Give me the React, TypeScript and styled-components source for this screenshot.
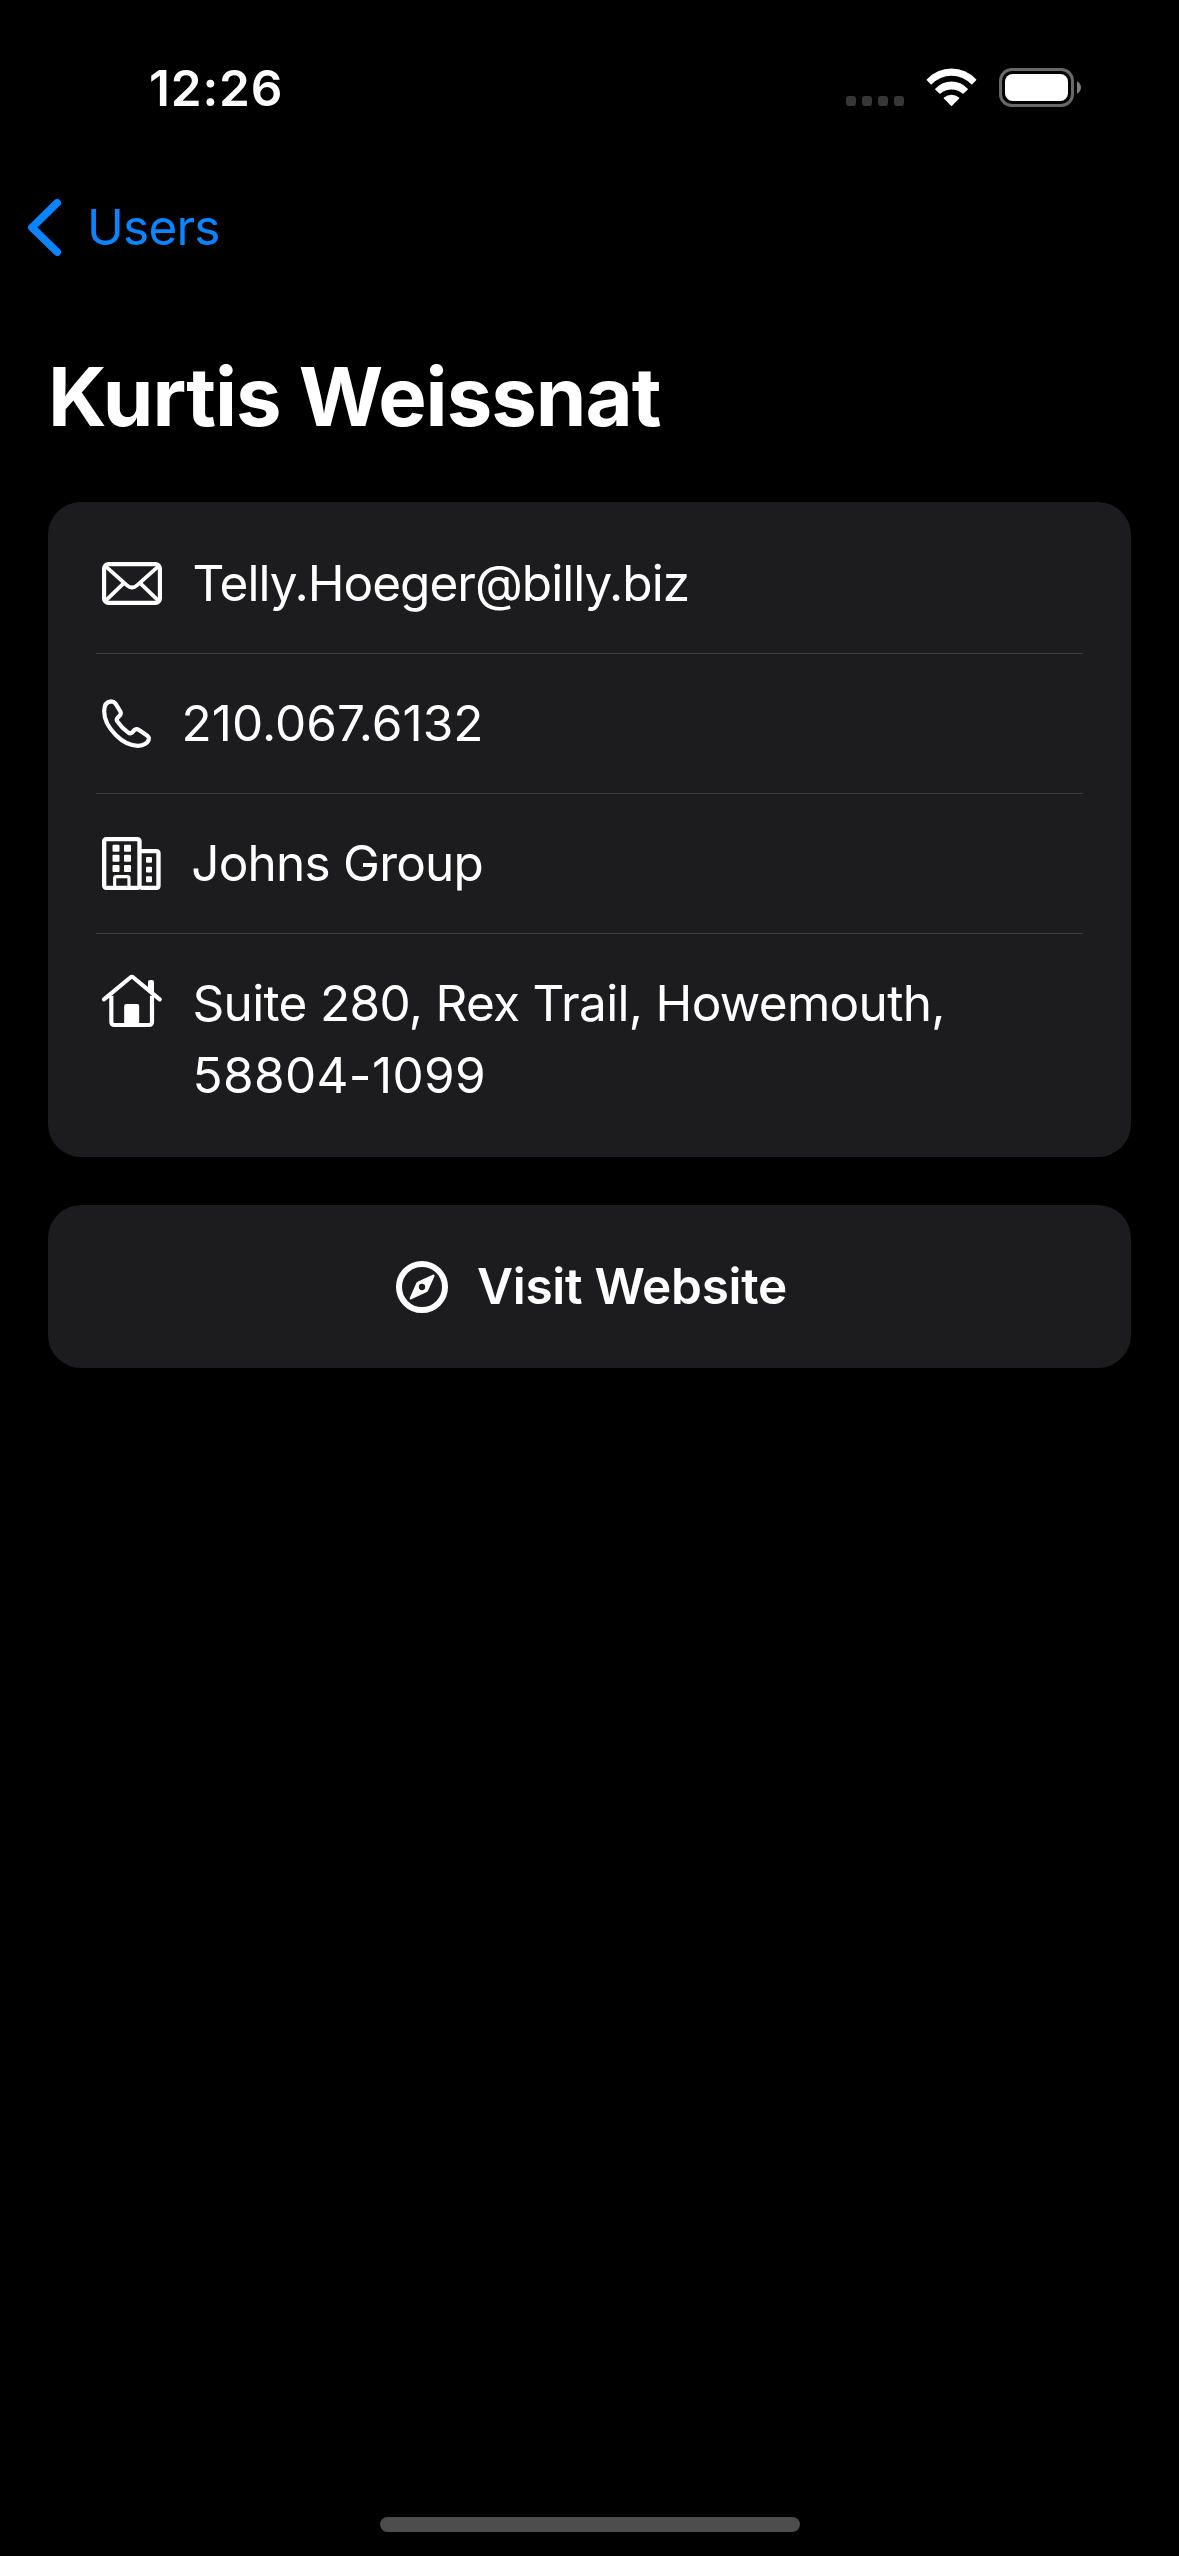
import React from "react";
import styled, { createGlobalStyle } from "styled-components";

const GlobalStyle = createGlobalStyle`
  *, *::before, *::after { box-sizing: border-box; }
  body { margin: 0; background: #000; }
`;

const Screen = styled.div`
  display: flex;
  flex-direction: column;
  width: 1179px;
  height: 2556px;
  background: #000;
  color: #fff;
  font-family: Inter, "Liberation Sans", sans-serif;
  font-size: 49.5px;
  overflow: hidden;
`;

const Label = styled.span<{ $tracking: number }>`
  display: block;
  letter-spacing: ${(p) => p.$tracking}px;
  white-space: nowrap;
`;

const StatusBar = styled.header`
  display: flex;
  align-items: flex-start;
  justify-content: space-between;
  height: 177px;
  padding: 58px 98px 0 149px;
`;

const Time = styled.div`
  font-weight: 600;
  line-height: 60px;
`;

const Indicators = styled.div`
  display: flex;
  gap: 22px;
`;

const NavBar = styled.nav`
  display: flex;
  height: 100px;
  padding-left: 28px;
`;

const BackButton = styled.button`
  display: flex;
  align-items: center;
  gap: 26px;
  padding: 0;
  border: 0;
  background: none;
  color: #0a84ff;
  font: inherit;
  line-height: 100px;
`;

const Title = styled.h1`
  margin: 70px 48px 55px;
  font-size: 81.4px;
  font-weight: 700;
  line-height: 100px;
`;

const Card = styled.section`
  margin: 0 48px;
  padding: 12px 48px;
  border-radius: 33px;
  background: #1c1c1e;
`;

const Row = styled.div`
  display: flex;
  gap: 30.5px;
  padding: 33px 0 34px 6px;
  border-bottom: 1px solid #3d3d40;

  &:last-child {
    border-bottom: 0;
  }
`;

const RowText = styled.div`
  line-height: 72px;
`;

const WebsiteButton = styled.button`
  display: flex;
  align-items: center;
  justify-content: center;
  gap: 29px;
  height: 163px;
  margin: 48px 48px 0;
  padding: 0 0 0 4px;
  border: 0;
  border-radius: 33px;
  background: #1c1c1e;
  color: #fff;
  font: inherit;
  font-weight: 600;
  line-height: 60px;
`;

const ButtonText = styled.div`
  padding-bottom: 2px;
`;

const HomeIndicator = styled.div`
  align-self: center;
  width: 420px;
  height: 15px;
  margin: auto 0 24px;
  border-radius: 8px;
  background: #4d4d4d;
`;

const Glyph = styled.svg`
  display: block;
  flex: none;
  fill: none;
  stroke: currentColor;
  stroke-linecap: round;
  stroke-linejoin: round;
`;

const CellularDots = () => (
  <Glyph width="58" height="60" viewBox="78 54 174 180">
    <g fill="#363636" stroke="none">
      {[78, 126, 174, 222].map((x) => (
        <rect key={x} x={x} y="168" width="30" height="30" rx="9" />
      ))}
    </g>
  </Glyph>
);

const WifiIcon = () => (
  <Glyph width="51" height="60" viewBox="318 54 153 180">
    <g fill="#fff" stroke="none">
      <path d="M320.5 121Q319 119 321 117.500A100 100 0 0 1 468 117.500Q470 119 468.500 121L457 133Q455.500 134.500 454 133A81 81 0 0 0 335 133Q333.500 134.500 332 133Z" />
      <path d="M346 149Q344.500 147 346.500 145.500A65 65 0 0 1 442.500 145.500Q444.500 147 443 149L430.500 160.500Q429 162 427.500 160.500A51 51 0 0 0 361.500 160.500Q360 162 358.500 160.500Z" />
      <path d="M371.500 175.500Q370.500 174 372 172.500A35 35 0 0 1 417 172.500Q418.500 174 417.500 175.500L396 197Q394.500 198.500 393 197Z" />
    </g>
  </Glyph>
);

const BatteryIcon = () => (
  <Glyph width="82" height="60" viewBox="537 54 246 180">
    <rect x="541.5" y="88.5" width="216" height="108" rx="34" stroke="#686868" strokeWidth="9" />
    <rect x="555" y="102" width="189" height="81" rx="23" fill="#fff" stroke="none" />
    <path d="M771 124Q783 131 783 142.500Q783 154 771 161Z" fill="#7d7d7d" stroke="none" />
  </Glyph>
);

const ChevronIcon = () => (
  <Glyph width="33" height="57" viewBox="84 475 99 171">
    <path d="M171.500 486.500L96 560.500L171.500 634" strokeWidth="23" />
  </Glyph>
);

const MailIcon = () => (
  <Glyph width="60" height="72" viewBox="186 171 180 216" strokeWidth="12.500">
    <rect x="192.250" y="222.250" width="167.500" height="116.500" rx="13" />
    <path d="M197 229L261 286Q276 299 291 286L355 229" strokeWidth="11.500" />
    <path d="M197 332L250 281M355 332L302 281" strokeWidth="11.500" />
  </Glyph>
);

const PhoneIcon = () => (
  <Glyph width="49" height="72" viewBox="186 591 147 216" strokeWidth="12.500">
    <path d="M213 634C200 635 192.500 646 192.500 664C192.500 690 210 718 228 736C246 754 270 767.500 294 767.500C311 767.500 325 758 326.500 747C327 742 324 738 319 735L297 720C291 716 286 717 282 721L277 727C273 731 269 731 264 727C253 719 240 706 232 694C229 689 229 687 233 683L240 676C243 672 243 668 241 664L226 640C222 635 218 634 213 634Z" />
  </Glyph>
);

const BuildingIcon = () => (
  <Glyph width="58.670" height="72" viewBox="186 201 176 216" strokeWidth="13">
    <rect x="192.500" y="237.500" width="106" height="146" rx="6" />
    <path d="M301 273.500H348.500Q355.500 273.500 355.500 280.500V376.500Q355.500 383.500 348.500 383.500H301" strokeLinecap="butt" />
    <path d="M224 384V355Q224 350 229 350H262Q267 350 267 355V384" strokeWidth="9.500" />
    <g fill="currentColor" stroke="none">
      {[254, 284.5, 315].map((y) => (
        <React.Fragment key={y}>
          <rect x="217.500" y={y} width="21" height="21" rx="3" />
          <rect x="252" y={y} width="21" height="21" rx="3" />
        </React.Fragment>
      ))}
      {[291, 320, 349].map((y) => (
        <rect key={y} x="318" y={y} width="18" height="17.500" rx="3" />
      ))}
    </g>
  </Glyph>
);

const HouseIcon = () => (
  <Glyph width="60" height="72" viewBox="186 201 180 216" strokeWidth="12.500">
    <path d="M192 298L271 232.500Q275.500 228.500 280 232.500L359 298" />
    <path d="M214 287V365Q214 375 224 375H326Q336 375 336 365V287" strokeLinecap="butt" />
    <path d="M324 246Q324 240 330 240H336Q342 240 342 246V287L324 272Z" fill="currentColor" stroke="none" />
    <path d="M252.500 375V318Q252.500 312 258.500 312H291.500Q297.500 312 297.500 318V375Z" fill="currentColor" stroke="none" />
  </Glyph>
);

const CompassIcon = () => (
  <Glyph width="52" height="52" viewBox="48 93 156 156">
    <circle cx="126" cy="171" r="69" strokeWidth="18" />
    <path
      d="M158.500 134Q165 132 163.500 139L144 182Q142.500 185.500 139 187L94 207.500Q87.500 210 89.500 203L109 159Q110.500 156 114 154.500ZM126 161.500A9.500 9.500 0 1 0 126 180.500A9.500 9.500 0 1 0 126 161.500Z"
      fill="currentColor"
      fillRule="evenodd"
      stroke="none"
    />
  </Glyph>
);

type Line = { text: string; tracking: number };

const contact: { icon: React.ReactNode; lines: Line[] }[] = [
  { icon: <MailIcon />, lines: [{ text: "Telly.Hoeger@billy.biz", tracking: -0.98 }] },
  { icon: <PhoneIcon />, lines: [{ text: "210.067.6132", tracking: 0.03 }] },
  { icon: <BuildingIcon />, lines: [{ text: "Johns Group", tracking: -0.78 }] },
  {
    icon: <HouseIcon />,
    lines: [
      { text: "Suite 280, Rex Trail, Howemouth,", tracking: -0.68 },
      { text: "58804-1099", tracking: 0.36 },
    ],
  },
];

export default function App() {
  return (
    <>
      <GlobalStyle />
      <Screen>
        <StatusBar>
          <Time>
            <Label $tracking={0.83}>12:26</Label>
          </Time>
          <Indicators>
            <CellularDots />
            <WifiIcon />
            <BatteryIcon />
          </Indicators>
        </StatusBar>
        <NavBar>
          <BackButton>
            <ChevronIcon />
            <Label $tracking={-0.79}>Users</Label>
          </BackButton>
        </NavBar>
        <Title>
          <Label $tracking={-1.02}>Kurtis Weissnat</Label>
        </Title>
        <Card>
          {contact.map((row, i) => (
            <Row key={i}>
              {row.icon}
              <RowText>
                {row.lines.map((line) => (
                  <Label key={line.text} $tracking={line.tracking}>
                    {line.text}
                  </Label>
                ))}
              </RowText>
            </Row>
          ))}
        </Card>
        <WebsiteButton>
          <CompassIcon />
          <ButtonText>
            <Label $tracking={-0.28}>Visit Website</Label>
          </ButtonText>
        </WebsiteButton>
        <HomeIndicator />
      </Screen>
    </>
  );
}
